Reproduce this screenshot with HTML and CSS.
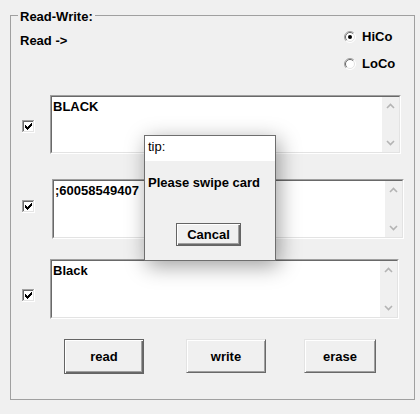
FILE: index.html
```html
<!DOCTYPE html>
<html>
<head>
<meta charset="utf-8">
<link rel="stylesheet" href="styles.css">
</head>
<body>
<fieldset class="group">
  <legend class="group-title">Read-Write:</legend>
  <div class="head">
    <span class="read-label">Read -&gt;</span>
    <div class="radios">
      <label class="radio">
        <svg class="radio-mark" width="12" height="12" viewBox="0 0 12 12">
          <circle cx="6" cy="6" r="5.5" fill="#fff"/>
          <path d="M2.1 9.9 A5.5 5.5 0 0 1 9.9 2.1" stroke="#a0a0a0" fill="none"/>
          <path d="M2.8 9.2 A4.5 4.5 0 0 1 9.2 2.8" stroke="#696969" fill="none"/>
          <path d="M9.9 2.1 A5.5 5.5 0 0 1 2.1 9.9" stroke="#ffffff" fill="none"/>
          <path d="M9.2 2.8 A4.5 4.5 0 0 1 2.8 9.2" stroke="#e3e3e3" fill="none"/>
          <circle cx="6" cy="6" r="2" fill="#000"/>
        </svg>
        <span>HiCo</span>
      </label>
      <label class="radio">
        <svg class="radio-mark" width="12" height="12" viewBox="0 0 12 12">
          <circle cx="6" cy="6" r="5.5" fill="#fff"/>
          <path d="M2.1 9.9 A5.5 5.5 0 0 1 9.9 2.1" stroke="#a0a0a0" fill="none"/>
          <path d="M2.8 9.2 A4.5 4.5 0 0 1 9.2 2.8" stroke="#696969" fill="none"/>
          <path d="M9.9 2.1 A5.5 5.5 0 0 1 2.1 9.9" stroke="#ffffff" fill="none"/>
          <path d="M9.2 2.8 A4.5 4.5 0 0 1 2.8 9.2" stroke="#e3e3e3" fill="none"/>
        </svg>
        <span>LoCo</span>
      </label>
    </div>
  </div>

  <div class="row row-1">
    <span class="check check-1">
      <svg width="13" height="13" viewBox="0 0 13 13">
        <rect x="0" y="0" width="13" height="13" fill="#fff"/>
        <path d="M0 0H13V1H1V13H0z" fill="#a0a0a0"/>
        <path d="M1 1H12V2H2V12H1z" fill="#696969"/>
        <path d="M12 0H13V13H0V12H12z" fill="#fff"/>
        <path d="M11 1H12V12H1V11H11z" fill="#e3e3e3"/>
        <path d="M3 5h1v3H3z M4 6h1v3H4z M5 7h1v3H5z M6 6h1v3H6z M7 5h1v3H7z M8 4h1v3H8z M9 3h1v3H9z" fill="#000"/>
      </svg>
    </span>
    <div class="field field-1">
      <div class="field-inner">
        <div class="field-text">BLACK</div>
        <div class="scroll">
          <svg width="9" height="6" viewBox="0 0 9 6"><polyline points="1,5 4.5,1.5 8,5" fill="none" stroke="#b4b4b4" stroke-width="1.6"/></svg>
          <svg width="9" height="6" viewBox="0 0 9 6"><polyline points="1,1 4.5,4.5 8,1" fill="none" stroke="#b4b4b4" stroke-width="1.6"/></svg>
        </div>
      </div>
    </div>
  </div>

  <div class="row row-2">
    <span class="check check-2">
      <svg width="13" height="13" viewBox="0 0 13 13">
        <rect x="0" y="0" width="13" height="13" fill="#fff"/>
        <path d="M0 0H13V1H1V13H0z" fill="#a0a0a0"/>
        <path d="M1 1H12V2H2V12H1z" fill="#696969"/>
        <path d="M12 0H13V13H0V12H12z" fill="#fff"/>
        <path d="M11 1H12V12H1V11H11z" fill="#e3e3e3"/>
        <path d="M3 5h1v3H3z M4 6h1v3H4z M5 7h1v3H5z M6 6h1v3H6z M7 5h1v3H7z M8 4h1v3H8z M9 3h1v3H9z" fill="#000"/>
      </svg>
    </span>
    <div class="field field-2">
      <div class="field-inner">
        <div class="field-text">;60058549407</div>
        <div class="scroll">
          <svg width="9" height="6" viewBox="0 0 9 6"><polyline points="1,5 4.5,1.5 8,5" fill="none" stroke="#b4b4b4" stroke-width="1.6"/></svg>
          <svg width="9" height="6" viewBox="0 0 9 6"><polyline points="1,1 4.5,4.5 8,1" fill="none" stroke="#b4b4b4" stroke-width="1.6"/></svg>
        </div>
      </div>
    </div>
  </div>

  <div class="row row-3">
    <span class="check check-3">
      <svg width="13" height="13" viewBox="0 0 13 13">
        <rect x="0" y="0" width="13" height="13" fill="#fff"/>
        <path d="M0 0H13V1H1V13H0z" fill="#a0a0a0"/>
        <path d="M1 1H12V2H2V12H1z" fill="#696969"/>
        <path d="M12 0H13V13H0V12H12z" fill="#fff"/>
        <path d="M11 1H12V12H1V11H11z" fill="#e3e3e3"/>
        <path d="M3 5h1v3H3z M4 6h1v3H4z M5 7h1v3H5z M6 6h1v3H6z M7 5h1v3H7z M8 4h1v3H8z M9 3h1v3H9z" fill="#000"/>
      </svg>
    </span>
    <div class="field field-3">
      <div class="field-inner">
        <div class="field-text">Black</div>
        <div class="scroll">
          <svg width="9" height="6" viewBox="0 0 9 6"><polyline points="1,5 4.5,1.5 8,5" fill="none" stroke="#b4b4b4" stroke-width="1.6"/></svg>
          <svg width="9" height="6" viewBox="0 0 9 6"><polyline points="1,1 4.5,4.5 8,1" fill="none" stroke="#b4b4b4" stroke-width="1.6"/></svg>
        </div>
      </div>
    </div>
  </div>

  <div class="buttons">
    <button class="btn btn-default btn-read">read</button>
    <button class="btn btn-write">write</button>
    <button class="btn btn-erase">erase</button>
  </div>
</fieldset>

<div class="dialog">
  <div class="dialog-title">tip:</div>
  <div class="dialog-body">
    <div class="dialog-msg">Please swipe card</div>
    <button class="btn btn-default btn-cancel">Cancal</button>
  </div>
</div>
</body>
</html>
```

FILE: styles.css
```css
html, body {
  margin: 0;
  padding: 0;
  background: #f0f0f0;
}

body {
  width: 420px;
  height: 414px;
  padding: 6px 0 0 10px;
  box-sizing: border-box;
  font-family: "Liberation Sans", Arial, sans-serif;
  font-size: 13px;
  font-weight: bold;
  color: #000;
  position: relative;
  overflow: hidden;
}

.group {
  margin: 0;
  padding: 0 0 25px 0;
  width: 405px;
  box-sizing: border-box;
  border: 1px solid #a0a0a0;
  min-width: 0;
}

.group-title {
  margin-left: 7px;
  padding: 3px 2px 0 2px;
  line-height: 15px;
}

.head {
  display: flex;
  align-items: flex-start;
  height: 48px;
}

.read-label {
  margin: 9px 0 0 9px;
  line-height: 15px;
}

.radios {
  margin: 5px 0 0 auto;
  width: 70px;
  display: flex;
  flex-direction: column;
  gap: 12px;
}

.radio {
  display: flex;
  align-items: center;
  gap: 6px;
  line-height: 15px;
  height: 15px;
}

.radio-mark {
  display: block;
  flex: none;
}

.row {
  display: flex;
  align-items: flex-start;
}

.row-1 { margin-top: 23px; }
.row-2 { margin-top: 25px; }
.row-3 { margin-top: 20px; }

.check {
  display: block;
  margin-left: 11px;
  width: 13px;
  height: 13px;
}

.check svg { display: block; }

.check-1 { margin-top: 25px; }
.check-2 { margin-top: 21px; }
.check-3 { margin-top: 30px; }

.field {
  box-sizing: border-box;
  border: 1px solid;
  border-color: #a0a0a0 #ffffff #ffffff #a0a0a0;
  background: #fff;
}

.field-1 { margin-left: 15px; width: 351px; height: 59px; }
.field-2 { margin-left: 17px; width: 352px; height: 60px; }
.field-3 { margin-left: 15px; width: 349px; height: 60px; }

.field-inner {
  box-sizing: border-box;
  height: 100%;
  border: 1px solid;
  border-color: #696969 #e3e3e3 #e3e3e3 #696969;
  display: flex;
}

.field-text {
  flex: 1;
  padding: 2px 0 0 1px;
  line-height: 15px;
  white-space: nowrap;
  overflow: hidden;
}

.scroll {
  width: 17px;
  background: #f0f0f0;
  display: flex;
  flex-direction: column;
  justify-content: space-between;
  align-items: center;
  padding: 6px 0 6px 0;
}

.scroll svg { display: block; }

.buttons {
  display: flex;
  align-items: flex-start;
  margin-top: 20px;
  height: 35px;
}

.btn {
  font-family: "Liberation Sans", Arial, sans-serif;
  font-size: 13px;
  font-weight: bold;
  color: #000;
  background: #f0f0f0;
  box-sizing: border-box;
  padding: 0;
  border: 1px solid;
  border-color: #e3e3e3 #696969 #696969 #e3e3e3;
  box-shadow: inset 1px 1px #ffffff, inset -1px -1px #a0a0a0;
  line-height: 15px;
}

.btn-default {
  border-color: #646464;
  box-shadow: inset 1px 1px #ffffff, inset -1px -1px #696969, inset -2px -2px #a0a0a0;
}

.btn-read { margin-left: 53px; width: 80px; height: 35px; }
.btn-write { margin-left: 42px; width: 80px; height: 34px; }
.btn-erase { margin-left: 38px; width: 72px; height: 34px; }

.dialog {
  position: absolute;
  left: 144px;
  top: 135px;
  width: 132px;
  height: 126px;
  box-sizing: border-box;
  border: 1px solid #6e6e6e;
  background: #f0f0f0;
  box-shadow: 3px 5px 20px rgba(0, 0, 0, 0.38);
}

.dialog-title {
  height: 25px;
  box-sizing: border-box;
  background: #fff;
  padding: 0 0 4px 3px;
  line-height: 21px;
  font-weight: normal;
}

.dialog-body {
  padding: 14px 0 0 3px;
}

.dialog-msg {
  line-height: 15px;
}

.btn-cancel {
  display: block;
  margin: 33px 0 0 28px;
  width: 65px;
  height: 23px;
}
```
